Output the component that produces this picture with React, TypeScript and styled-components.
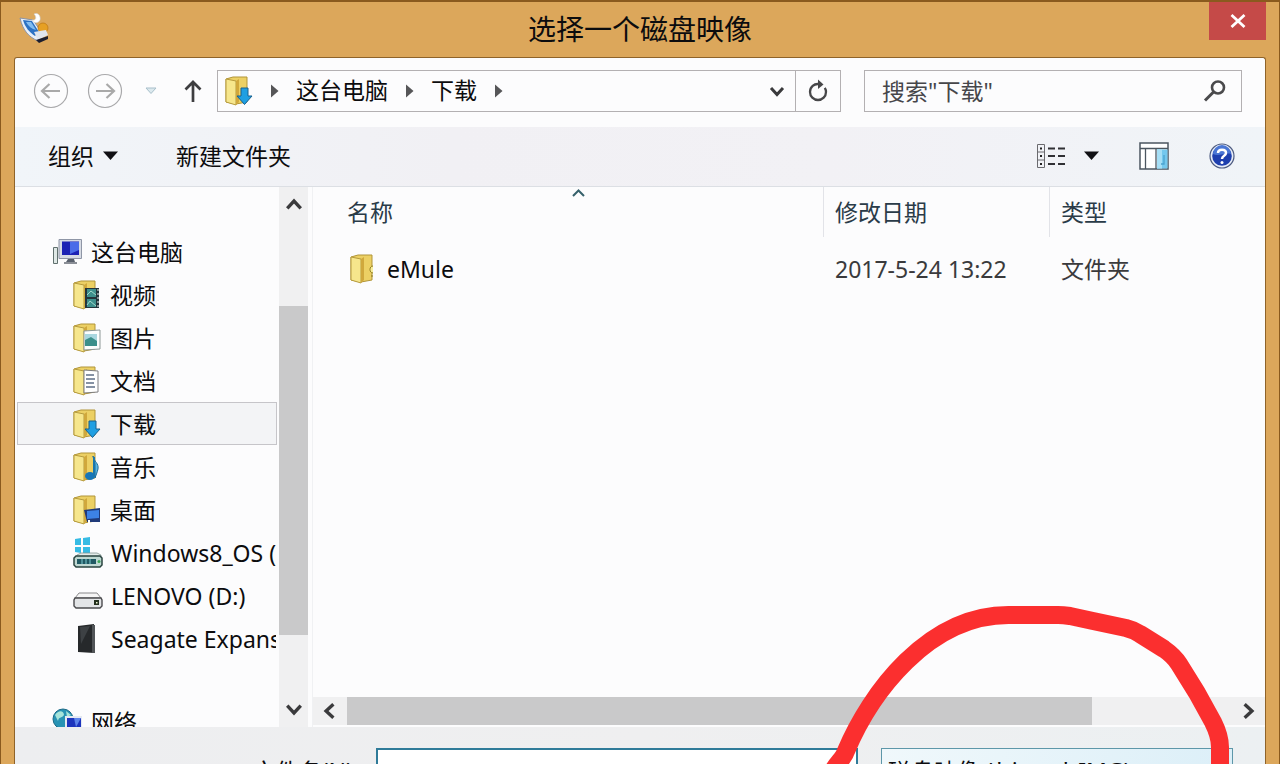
import React from "react";
import styled, { createGlobalStyle } from "styled-components";

const GlobalStyle = createGlobalStyle`
  * { box-sizing: border-box; }
  body { margin: 0; overflow: hidden; }
  body, button, input, select, table {
    font-family: "Noto Sans", "Noto Sans CJK SC", sans-serif;
    font-size: 23px;
    line-height: 32px;
    color: #0c0c0e;
  }
  svg { flex: none; }
`;

const Window = styled.div`
  position: relative;
  display: flex;
  flex-direction: column;
  height: 100vh;
  padding: 0 13px;
  background: #dca75b;
  border: 1px solid #8a5a1e;
  border-top-width: 2px;
  border-bottom: 0;
  overflow: hidden;
`;

const TitleBar = styled.header`
  display: flex;
  flex: none;
  align-items: center;
  height: 55px;
`;

const AppIconSlot = styled.div`
  display: flex;
  flex: 1 1 0;
  padding-bottom: 4px;
  svg { margin-left: 5px; }
`;

const Title = styled.h1`
  margin: 0;
  padding-bottom: 2px;
  font-size: 28px;
  font-weight: 400;
  line-height: 40px;
`;

const TitleActions = styled.div`
  display: flex;
  flex: 1 1 0;
  align-self: flex-start;
  justify-content: flex-end;
`;

const CloseButton = styled.button`
  display: flex;
  align-items: center;
  justify-content: center;
  width: 57px;
  height: 38px;
  padding: 0;
  border: 0;
  background: #c54a48;
`;

const Dialog = styled.main`
  display: flex;
  flex: 1;
  flex-direction: column;
  min-height: 0;
  border: 1px solid #8f6329;
  border-bottom: 0;
  border-radius: 3px 3px 0 0;
  background: #fcfcfd;
  overflow: hidden;
`;

const NavBar = styled.nav`
  display: flex;
  flex: none;
  align-items: center;
  height: 69px;
  padding: 0 23px 3px 18px;
`;

const NavButtons = styled.div`
  display: flex;
  align-items: center;
  gap: 18px;
  margin-right: 10px;
`;

const IconButton = styled.button<{ $width: number }>`
  display: flex;
  flex: none;
  align-items: center;
  justify-content: center;
  width: ${(p) => p.$width}px;
  height: 36px;
  max-height: 100%;
  padding: 0;
  border: 0;
  background: none;
`;

const AddressBar = styled.div`
  display: flex;
  flex: 624 1 624px;
  align-items: center;
  gap: 17px;
  height: 42px;
  margin-right: 23px;
  padding-left: 7px;
  border: 1px solid #b3b0b2;
`;

const Crumb = styled.button`
  padding: 0 0 2px;
  border: 0;
  background: none;
  white-space: nowrap;
`;

const AddressTools = styled.div`
  display: flex;
  align-items: center;
  align-self: stretch;
  margin-left: auto;
`;

const RefreshCell = styled.div`
  display: flex;
  align-items: center;
  align-self: stretch;
  border-left: 1px solid #b3b0b2;
`;

const SearchBox = styled.form`
  display: flex;
  flex: 378 1 378px;
  align-items: center;
  height: 42px;
  min-width: 0;
  padding: 0 8px 0 17px;
  border: 1px solid #b3b0b2;
`;

const SearchInput = styled.input`
  flex: 1;
  min-width: 0;
  padding: 0;
  border: 0;
  outline: 0;
  background: none;
  &::placeholder { color: #46464a; opacity: 1; }
`;

const Toolbar = styled.div`
  display: flex;
  flex: none;
  align-items: center;
  justify-content: space-between;
  height: 60px;
  padding: 0 30px 2px 33px;
  border-bottom: 1px solid #dcdfe4;
  background: linear-gradient(90deg, #f1f5f9, #f1f0f4 35%, #f2f1f5 65%, #f0f4f8);
`;

const ToolGroup = styled.div<{ $gap: number }>`
  display: flex;
  align-items: center;
  gap: ${(p) => p.$gap}px;
`;

const ToolButton = styled.button<{ $gap?: number }>`
  display: flex;
  align-items: center;
  gap: ${(p) => p.$gap ?? 0}px;
  padding: 0;
  border: 0;
  background: none;
  white-space: nowrap;
`;

const Panes = styled.div`
  display: flex;
  flex: 1;
  min-height: 0;
`;

const Sidebar = styled.aside`
  flex: none;
  width: 264px;
  padding: 43px 2px 0;
  overflow: hidden;
`;

const Tree = styled.ul`
  margin: 0;
  padding: 0;
  list-style: none;
`;

const NetworkTree = styled(Tree)`
  margin-top: 40px;
`;

const TreeItem = styled.a<{ $level: number; $active?: boolean }>`
  display: flex;
  align-items: center;
  gap: 8px;
  height: 43px;
  padding-left: ${(p) => (p.$level === 0 ? 34 : 55)}px;
  border: 1px solid ${(p) => (p.$active ? "#c6c5c9" : "transparent")};
  background: ${(p) => (p.$active ? "#f3f4f6" : "transparent")};
  color: inherit;
  text-decoration: none;
  white-space: nowrap;
  overflow: hidden;
`;

const VerticalScroll = styled.div`
  display: flex;
  flex: none;
  flex-direction: column;
  width: 29px;
  background: #f0f0f1;
`;

const ScrollSpace = styled.div<{ $grow: number }>`
  flex: ${(p) => p.$grow} 1 0;
`;

const ScrollThumb = styled(ScrollSpace)`
  background: #c9c9ca;
`;

const FilePane = styled.section`
  display: flex;
  flex: 1;
  flex-direction: column;
  justify-content: space-between;
  min-width: 0;
  margin-left: 4px;
  border-left: 1px solid #f0f1f3;
`;

const FileTable = styled.table`
  width: 100%;
  border-collapse: separate;
  border-spacing: 0;
  table-layout: fixed;
`;

const HeadCell = styled.th<{ $width?: number; $first?: boolean }>`
  position: relative;
  width: ${(p) => (p.$width ? `${p.$width}px` : "auto")};
  height: 50px;
  padding: 0 0 0 ${(p) => (p.$first ? 34 : 11)}px;
  border-left: ${(p) => (p.$first ? "0" : "1px solid #e2e3e8")};
  color: #2a3b48;
  font-weight: 400;
  text-align: left;
`;

const SortMark = styled.span`
  position: absolute;
  top: 2px;
  right: 0;
  left: 20px;
  display: flex;
  justify-content: center;
`;

const Cell = styled.td<{ $first?: boolean }>`
  height: 64px;
  padding: 0 0 0 ${(p) => (p.$first ? 37 : 12)}px;
  color: ${(p) => (p.$first ? "#0c0c0e" : "#3a3a3c")};
  white-space: nowrap;
`;

const FileName = styled.div`
  display: flex;
  align-items: center;
  gap: 12px;
`;

const HorizontalScroll = styled.div`
  display: flex;
  flex: none;
  height: 28px;
  margin-bottom: 2px;
  background: #f0f0f1;
`;

const Footer = styled.form`
  display: flex;
  flex: none;
  height: 37px;
  padding: 21px 32px 0 0;
  background: linear-gradient(90deg, #edeef0, #efeff0 50%, #ecf0f2);
  overflow: hidden;
`;

const FieldLabel = styled.label`
  flex: none;
  width: 344px;
  margin-right: 17px;
  line-height: 46px;
  text-align: right;
`;

const FileNameInput = styled.input`
  flex: 482 1 482px;
  min-width: 0;
  height: 46px;
  margin-right: 23px;
  border: 2px solid #2f7b99;
  border-radius: 0;
  outline: 0;
  background: #ffffff;
`;

const TypeSelect = styled.select`
  flex: 352 1 352px;
  min-width: 0;
  height: 46px;
  padding: 0 6px;
  appearance: none;
  border: 1px solid #5d97a9;
  border-radius: 0;
  background: linear-gradient(90deg, #f0f8fb, #dceff8);
`;

const Annotation = styled.svg`
  position: absolute;
  right: -1px;
  bottom: 0;
  pointer-events: none;
`;

/* ---- icons ---- */

const AppIcon = () => (
  <svg width="32" height="32" viewBox="0 0 32 32" aria-hidden="true">
    <path d="M1 6 14 8 23 21 19 29C10 25 4 19 1 6Z" fill="#e9eff7" stroke="#8a94a8" />
    <path d="M4 8 13 9 20 20 16 24C10 20 6 15 4 8Z" fill="#2c72c4" />
    <path d="M7 10 12 10 17 18C13 17 9 14 7 10Z" fill="#83bdf0" />
    <path d="M15 2C19 0 22 4 21 8 19 12 14 11 13 8 17 9 18 5 15 2Z" fill="#ffffff" stroke="#cfd3db" strokeWidth=".6" />
    <circle cx="24" cy="16" r="5" fill="#e6a024" stroke="#bd7610" strokeWidth=".7" />
    <path d="M15 20 27 18 29 23 19 28Z" fill="#dfe5ee" />
    <path d="M17 28 29 24 29 27 20 31Z" fill="#1c1e2e" />
  </svg>
);

const CloseIcon = () => (
  <svg width="18" height="16" viewBox="0 0 18 16" aria-hidden="true">
    <path d="M2.500 2 15.500 14M15.500 2 2.500 14" stroke="#fff" strokeWidth="2.800" />
  </svg>
);

const CircleArrow = ({ flip }: { flip?: boolean }) => (
  <svg width="36" height="36" viewBox="0 0 36 36" fill="none" aria-hidden="true">
    <circle cx="18" cy="18" r="16.5" stroke="#a9a9ab" strokeWidth="1.2" />
    <path
      d={flip ? "M9 18H27M19.500 11 27 18 19.500 25" : "M27 18H9M16.500 11 9 18 16.500 25"}
      stroke="#a9a9a9"
      strokeWidth="2.200"
    />
  </svg>
);

const HistoryCaret = () => (
  <svg width="12" height="8" viewBox="0 0 12 8" aria-hidden="true">
    <path d="M1 1H11L6 6.500Z" fill="#dce9ee" stroke="#a8bfca" />
  </svg>
);

const UpArrow = () => (
  <svg width="20" height="24" viewBox="0 0 20 24" fill="none" aria-hidden="true">
    <path d="M10 23V3M2.500 10.500 10 3 17.500 10.500" stroke="#3e3e40" strokeWidth="2.700" />
  </svg>
);

const CrumbArrow = () => (
  <svg width="9" height="14" viewBox="0 0 9 14" aria-hidden="true">
    <path d="M1 0.500 8.500 7 1 13.500Z" fill="#565658" />
  </svg>
);

const Chevron = ({ turn = 0, size = 16 }: { turn?: number; size?: number }) => (
  <svg width={size} height={size} viewBox="0 0 16 16" fill="none" aria-hidden="true">
    <path d="M2 5 8 11.500 14 5" stroke="#3a3a3c" strokeWidth="3" transform={`rotate(${turn} 8 8)`} />
  </svg>
);

const RefreshIcon = () => (
  <svg width="22" height="24" viewBox="0 0 22 24" fill="none" aria-hidden="true">
    <path d="M12.500 5.200C7 4.200 3 8 3 13a8 8 0 0 0 16 0c0-1.600-.4-3-1.200-4.200" stroke="#474749" strokeWidth="2.300" />
    <path d="M11 0.500 16.500 5.500 11 10Z" fill="#474749" />
  </svg>
);

const SearchIcon = () => (
  <svg width="24" height="24" viewBox="0 0 24 24" fill="none" aria-hidden="true">
    <circle cx="15" cy="8.500" r="6" stroke="#4a4a4c" strokeWidth="2.600" />
    <path d="M10.500 13 2 21.500" stroke="#4a4a4c" strokeWidth="3" />
  </svg>
);

const MenuCaret = () => (
  <svg width="15" height="9" viewBox="0 0 15 9" aria-hidden="true">
    <path d="M0 0.500H15L7.500 9Z" fill="#101014" />
  </svg>
);

const ListViewIcon = () => (
  <svg width="30" height="24" viewBox="0 0 30 24" fill="none" aria-hidden="true">
    <path d="M1.500 .5H8.500V23.500H1.500ZM1.500 8H8.500M1.500 16H8.500" stroke="#6a6a6e" />
    <path d="M4 4.500H6M4 12H6M4 20H6" stroke="#222" strokeWidth="2" />
    <path d="M12 4.500H19M22 4.500H29M12 12H19M22 12H29M12 20H19M22 20H29" stroke="#303034" strokeWidth="2" />
  </svg>
);

const PreviewPaneIcon = () => (
  <svg width="30" height="28" viewBox="0 0 30 28" aria-hidden="true">
    <path d="M1 1H29V27H1Z" fill="#fff" stroke="#4b5660" strokeWidth="1.500" />
    <path d="M1 6.500H29M6.500 6.500V27M17 6.500V27" stroke="#4b5660" strokeWidth="1.300" />
    <path d="M18 7.500H28.500V26.500H18Z" fill="#74c8ee" />
    <path d="M18 7.500H23V26.500H18Z" fill="#a6dff6" />
    <path d="M22 22H25V13" stroke="#4ba3cf" strokeWidth="1.300" fill="none" />
  </svg>
);

const HelpIcon = () => (
  <svg width="26" height="26" viewBox="0 0 26 26" fill="none" aria-hidden="true">
    <circle cx="13" cy="13" r="12" fill="#e7edf8" stroke="#4d5b80" strokeWidth="1.200" />
    <circle cx="13" cy="13" r="9.800" fill="#1e3fae" />
    <path d="M4 11A9 9 0 0 1 22 11C16 9 10 14 4 11Z" fill="#4a76d4" />
    <path d="M9 10C9 5.500 17 5.500 17 10 17 13 13 12.500 13 16" stroke="#fff" strokeWidth="2.500" />
    <circle cx="13" cy="19.500" r="1.500" fill="#fff" />
  </svg>
);

const SortIcon = () => (
  <svg width="13" height="8" viewBox="0 0 13 8" fill="none" aria-hidden="true">
    <path d="M1 7 6.500 1.500 12 7" stroke="#36616b" strokeWidth="2" />
  </svg>
);

type FolderKind = "plain" | "video" | "picture" | "document" | "download" | "music" | "desktop";

const badges: Record<FolderKind, React.ReactNode> = {
  plain: (
    <path d="M23 12C19 12 19 19 23 19M21 22H23" stroke="#8d7a1c" fill="#f8ee9c" />
  ),
  video: (
    <g>
      <path d="M12 8H26V28H12Z" fill="#23343b" />
      <path d="M14 9H23V17H14ZM14 19H23V27H14Z" fill="#3d8f8c" />
      <path d="M14 15 18 11 23 15M14 25 17 21 23 26" stroke="#a2d9cb" fill="none" />
      <path d="M25 9V28" stroke="#e9f0f0" strokeDasharray="2 2" />
    </g>
  ),
  picture: (
    <g>
      <path d="M11 8 27 7V26L11 27Z" fill="#fbfdfd" stroke="#8d9898" />
      <path d="M12 11H24V23H12Z" fill="#a9d7e0" />
      <path d="M12 17 18 14 24 18V23H12Z" fill="#3b8f8b" />
    </g>
  ),
  document: (
    <g>
      <path d="M11 4 25 5V26L11 27Z" fill="#fff" stroke="#7d7d80" />
      <path d="M13 9H21M13 13H22M13 17H21M13 21H22" stroke="#5f6f86" strokeWidth="1.600" />
    </g>
  ),
  download: (
    <path d="M16 12H23V20H27L19.500 28.500 12 20H16Z" fill="#1f9fe2" stroke="#16608f" />
  ),
  music: (
    <g>
      <path d="M20 4C21 10 26 11 25 17 24 21 23 23 22 26V12Z" fill="#58b8e6" stroke="#1d6b96" />
      <ellipse cx="17" cy="24" rx="5" ry="4" fill="#1676b8" />
      <path d="M21 5V24" stroke="#1a76ad" strokeWidth="2" />
    </g>
  ),
  desktop: (
    <g>
      <path d="M11 15 27 13V27H14Z" fill="#203a79" />
      <path d="M14 16 26 15V23L14 24Z" fill="#3d82e6" />
      <path d="M15 29V25H17V29Z" fill="#fff" />
    </g>
  ),
};

const FolderIcon = ({ kind = "plain", width = 29 }: { kind?: FolderKind; width?: number }) => (
  <svg width={width} height="30" viewBox={`0 0 ${width} 30`} aria-hidden="true">
    <path d="M1 3 8 1H22V26L11 28 1 26Z" fill="#ecd064" stroke="#b19538" />
    <path d="M1 3 11 5V29L1 26Z" fill="#f6e68c" stroke="#b79c3e" />
    <path d="M11 5 14 3V26L11 29Z" fill="#d0a83c" />
    {badges[kind]}
  </svg>
);

const ComputerIcon = () => (
  <svg width="31" height="27" viewBox="0 0 31 27" aria-hidden="true">
    <path d="M1.500 9.500H5.500V25.500H1.500Z" fill="#dfe8e6" stroke="#60706e" />
    <path d="M7 1.500H29.500V20.500H7Z" fill="#d7dbe4" stroke="#8f96a6" />
    <path d="M10 3.500H27V17H10Z" fill="#1c22b4" />
    <path d="M18 4H27V12L18 16Z" fill="#4b6ce8" />
    <path d="M16 21H22L23 24H14Z" fill="#59606c" />
    <path d="M12 25H25" stroke="#6d727c" strokeWidth="1.600" />
  </svg>
);

const WindowsDriveIcon = () => (
  <svg width="30" height="31" viewBox="0 0 30 31" aria-hidden="true">
    <path d="M2 2 8 1V8H2ZM10 1 17 0V8H10ZM2 10H8V16L2 15ZM10 10H17V17L10 16Z" fill="#36bbe4" />
    <path d="M4 18 8 16H24L28 18V20H4Z" fill="#e4ecea" stroke="#849692" strokeWidth=".8" />
    <path d="M3 19H27L29 21V28L27 30H3L1 28V21Z" fill="#bfd8d2" stroke="#29433f" strokeWidth="1.500" />
    <path d="M4 22H23V27H4Z" fill="#205963" />
    <path d="M9 22V27M13 22V27M17 22V27" stroke="#7ccbd0" />
    <circle cx="26" cy="24.500" r="1.500" fill="#3ca65a" />
  </svg>
);

const DriveIcon = () => (
  <svg width="30" height="20" viewBox="0 -4 30 20" overflow="visible" aria-hidden="true">
    <path d="M2 8 6 3H24L28 8Z" fill="#f5f5f5" stroke="#88888a" />
    <path d="M2 8H28L29 10V16L27 18H3L1 16V10Z" fill="#e3e5e7" stroke="#4b4b4e" strokeWidth="1.400" />
    <path d="M21 10H26V15H21Z" fill="#24301e" />
    <path d="M23 12H24.500V13.500H23Z" fill="#e9f3ce" />
  </svg>
);

const ExternalDriveIcon = () => (
  <svg width="30" height="30" viewBox="0 0 30 30" aria-hidden="true">
    <path d="M5 2 21 0V29L5 28Z" fill="#26292b" />
    <path d="M19 1 22 1V29H19Z" fill="#505457" />
    <path d="M7 3 17 2 8 20Z" fill="#3d4144" />
  </svg>
);

const NetworkIcon = () => (
  <svg width="31" height="30" viewBox="0 0 31 30" aria-hidden="true">
    <circle cx="11" cy="12" r="10" fill="#2893b4" stroke="#1d6a86" />
    <path d="M3 8C7 2 12 4 12 8 9 12 7 9 6 14ZM14 4 19 8 15 10Z" fill="#a6e4da" />
    <path d="M13 9H30V22H13Z" fill="#e5e9f2" />
    <path d="M15 11H29V20H15Z" fill="#1d35bd" />
    <path d="M22 11H29L24 20Z" fill="#5c83ea" />
  </svg>
);

const places: { label: string; icon: React.ReactNode; active?: boolean }[] = [
  { label: "视频", icon: <FolderIcon kind="video" /> },
  { label: "图片", icon: <FolderIcon kind="picture" /> },
  { label: "文档", icon: <FolderIcon kind="document" /> },
  { label: "下载", icon: <FolderIcon kind="download" />, active: true },
  { label: "音乐", icon: <FolderIcon kind="music" /> },
  { label: "桌面", icon: <FolderIcon kind="desktop" /> },
  { label: "Windows8_OS (C:)", icon: <WindowsDriveIcon /> },
  { label: "LENOVO (D:)", icon: <DriveIcon /> },
  { label: "Seagate Expansion", icon: <ExternalDriveIcon /> },
];

export default function App() {
  return (
    <>
      <GlobalStyle />
      <Window>
        <TitleBar>
          <AppIconSlot>
            <AppIcon />
          </AppIconSlot>
          <Title>选择一个磁盘映像</Title>
          <TitleActions>
            <CloseButton aria-label="关闭">
              <CloseIcon />
            </CloseButton>
          </TitleActions>
        </TitleBar>

        <Dialog>
          <NavBar>
            <NavButtons>
              <IconButton $width={36} aria-label="后退"><CircleArrow /></IconButton>
              <IconButton $width={36} aria-label="前进"><CircleArrow flip /></IconButton>
              <IconButton $width={20} aria-label="最近位置"><HistoryCaret /></IconButton>
              <IconButton $width={28} aria-label="上移"><UpArrow /></IconButton>
            </NavButtons>
            <AddressBar>
              <FolderIcon kind="download" width={28} />
              <CrumbArrow />
              <Crumb>这台电脑</Crumb>
              <CrumbArrow />
              <Crumb>下载</Crumb>
              <CrumbArrow />
              <AddressTools>
                <IconButton $width={36} aria-label="展开"><Chevron /></IconButton>
                <RefreshCell>
                  <IconButton $width={44} aria-label="刷新"><RefreshIcon /></IconButton>
                </RefreshCell>
              </AddressTools>
            </AddressBar>
            <SearchBox>
              <SearchInput type="text" aria-label="搜索" placeholder={'搜索"下载"'} />
              <IconButton type="button" $width={36} aria-label="开始搜索"><SearchIcon /></IconButton>
            </SearchBox>
          </NavBar>

          <Toolbar>
            <ToolGroup $gap={58}>
              <ToolButton $gap={9}>组织<MenuCaret /></ToolButton>
              <ToolButton>新建文件夹</ToolButton>
            </ToolGroup>
            <ToolGroup $gap={40}>
              <ToolButton $gap={18} aria-label="更改视图"><ListViewIcon /><MenuCaret /></ToolButton>
              <ToolButton aria-label="预览窗格"><PreviewPaneIcon /></ToolButton>
              <ToolButton aria-label="帮助"><HelpIcon /></ToolButton>
            </ToolGroup>
          </Toolbar>

          <Panes>
            <Sidebar>
              <Tree>
                <li><TreeItem href="#" $level={0}><ComputerIcon />这台电脑</TreeItem></li>
                {places.map((p) => (
                  <li key={p.label}>
                    <TreeItem href="#" $level={1} $active={p.active}>{p.icon}{p.label}</TreeItem>
                  </li>
                ))}
              </Tree>
              <NetworkTree>
                <li><TreeItem href="#" $level={0}><NetworkIcon />网络</TreeItem></li>
              </NetworkTree>
            </Sidebar>
            <VerticalScroll>
              <IconButton $width={29} aria-label="向上滚动"><Chevron turn={180} size={18} /></IconButton>
              <ScrollSpace $grow={83} />
              <ScrollThumb $grow={329} />
              <ScrollSpace $grow={56} />
              <IconButton $width={29} aria-label="向下滚动"><Chevron size={18} /></IconButton>
            </VerticalScroll>

            <FilePane>
              <FileTable>
                <thead>
                  <tr>
                    <HeadCell $first>
                      名称
                      <SortMark><SortIcon /></SortMark>
                    </HeadCell>
                    <HeadCell $width={226}>修改日期</HeadCell>
                    <HeadCell $width={216}>类型</HeadCell>
                  </tr>
                </thead>
                <tbody>
                  <tr>
                    <Cell $first>
                      <FileName><FolderIcon width={25} />eMule</FileName>
                    </Cell>
                    <Cell>2017-5-24 13:22</Cell>
                    <Cell>文件夹</Cell>
                  </tr>
                </tbody>
              </FileTable>
              <HorizontalScroll>
                <IconButton $width={34} aria-label="向左滚动"><Chevron turn={90} size={18} /></IconButton>
                <ScrollThumb $grow={746} />
                <ScrollSpace $grow={139} />
                <IconButton $width={34} aria-label="向右滚动"><Chevron turn={-90} size={18} /></IconButton>
              </HorizontalScroll>
            </FilePane>
          </Panes>

          <Footer>
            <FieldLabel htmlFor="file-name">文件名(N):</FieldLabel>
            <FileNameInput id="file-name" type="text" />
            <TypeSelect aria-label="文件类型">
              <option>磁盘映像 (*.img;*.IMG)</option>
            </TypeSelect>
          </Footer>
        </Dialog>

        <Annotation width="460" height="170" viewBox="0 0 460 170" fill="none" aria-hidden="true">
          <path
            d="M14 175C18 168 24 164 26 157 50 100 108 20 190 21H238Q243 21 250 22L273 27 306 34Q314 36 320 40L344 55Q354 62 359 70L377 99 393 128C398 138 400 144 400 153V172"
            stroke="#fb2f2f"
            strokeWidth="18"
            strokeLinejoin="round"
            strokeLinecap="round"
          />
        </Annotation>
      </Window>
    </>
  );
}
